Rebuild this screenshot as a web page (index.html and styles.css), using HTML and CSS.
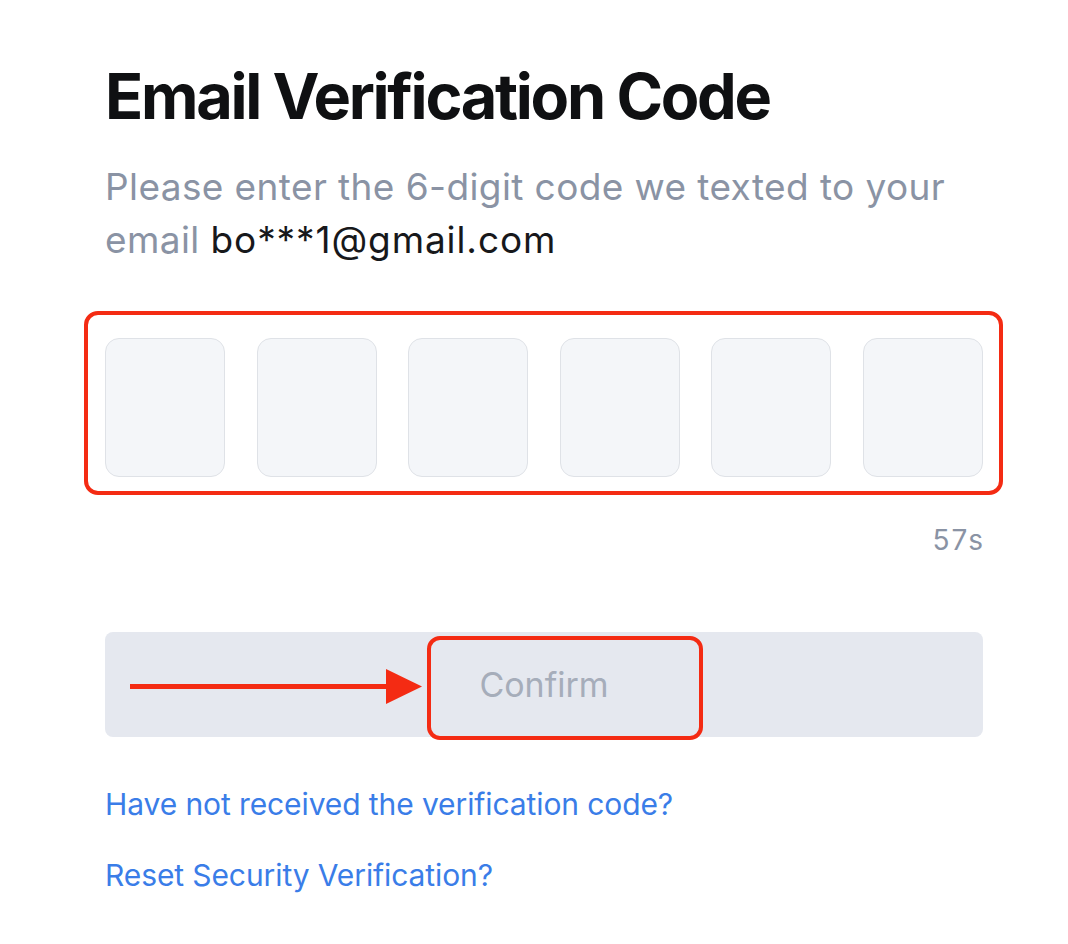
FILE: index.html
```html
<!DOCTYPE html>
<html>
<head>
<meta charset="utf-8">
<link rel="stylesheet" href="styles.css">
</head>
<body>
<main class="page">
  <h1 class="title">Email Verification Code</h1>
  <p class="subtitle">Please enter the 6-digit code we texted to your email <span class="email">bo***1@gmail.com</span></p>
  <div class="code-highlight">
    <div class="code-row">
      <div class="code-box"></div>
      <div class="code-box"></div>
      <div class="code-box"></div>
      <div class="code-box"></div>
      <div class="code-box"></div>
      <div class="code-box"></div>
    </div>
  </div>
  <div class="timer">57s</div>
  <div class="confirm-wrap">
    <button class="confirm">Confirm</button>
    <div class="confirm-highlight"></div>
    <svg class="arrow" width="296" height="40" viewBox="0 0 296 40">
      <rect x="0" y="17" width="260" height="5" fill="#f42b13"/>
      <polygon points="256,2 292,19.5 256,37" fill="#f42b13"/>
    </svg>
  </div>
  <a class="link first" href="#">Have not received the verification code?</a>
  <a class="link" href="#">Reset Security Verification?</a>
</main>
</body>
</html>
```
FILE: styles.css
```css
html, body {
  margin: 0;
  padding: 0;
  background: #ffffff;
}
body {
  font-family: "Inter", "Helvetica Neue", Arial, sans-serif;
}
*, *::before, *::after {
  box-sizing: border-box;
}
.page {
  width: 983px;
  padding: 58px 0 0 105px;
  display: flex;
  flex-direction: column;
}
.title {
  margin: 0;
  font-size: 63px;
  font-weight: 700;
  line-height: 76px;
  color: #0f1012;
  letter-spacing: -2.3px;
}
.subtitle {
  margin: 26px 0 0 0;
  font-size: 37px;
  line-height: 53px;
  color: #8a93a4;
  letter-spacing: 0.4px;
  width: 878px;
}
.email {
  color: #17181b;
  letter-spacing: 0.9px;
}
.code-highlight {
  margin: 45px 0 0 -21px;
  width: 919px;
  padding: 23px 16px 14px 17px;
  border: 4px solid #f42b13;
  border-radius: 14px;
}
.code-row {
  display: flex;
  justify-content: space-between;
}
.code-box {
  width: 120px;
  height: 139px;
  background: #f4f6f9;
  border: 1px solid #dfe2e7;
  border-radius: 14px;
}
.timer {
  align-self: flex-end;
  margin-top: 28px;
  font-size: 28px;
  line-height: 34px;
  letter-spacing: 2px;
  margin-right: -2px;
  color: #8a93a4;
}
.confirm-wrap {
  position: relative;
  margin-top: 75px;
}
.confirm {
  display: block;
  width: 878px;
  height: 105px;
  border: none;
  border-radius: 8px;
  background: #e5e8ef;
  color: #a6adba;
  font-family: inherit;
  font-size: 34px;
  padding: 0;
}
.confirm-highlight {
  position: absolute;
  left: 322px;
  top: 4px;
  width: 276px;
  height: 104px;
  border: 4px solid #f42b13;
  border-radius: 13px;
}
.arrow {
  position: absolute;
  left: 25px;
  top: 35px;
}
.link {
  font-size: 30px;
  line-height: 36px;
  color: #3a7de8;
  text-decoration: none;
  align-self: flex-start;
  margin-top: 35px;
  letter-spacing: -0.1px;
}
.link.first {
  margin-top: 49px;
}
```
